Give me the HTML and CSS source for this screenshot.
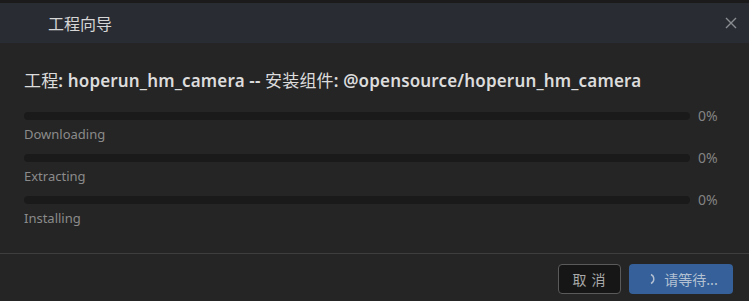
FILE: index.html
```html
<!DOCTYPE html>
<html lang="zh">
<head>
<meta charset="utf-8">
<link rel="stylesheet" href="styles.css">
</head>
<body>
<div class="dialog">
  <div class="topstrip"></div>
  <header class="header">
    <span class="htitle">工程向导</span>
    <svg class="close" width="12" height="12" viewBox="0 0 12 12"><path d="M1 1L11 11M11 1L1 11" stroke="#8a8d92" stroke-width="1.4" fill="none"/></svg>
  </header>
  <main class="body">
    <h1 class="title"><span class="cjk">工程</span>: hoperun_hm_camera -- <span class="cjk">安装组件</span>: @opensource/hoperun_hm_camera</h1>
    <div class="step">
      <div class="barrow"><div class="bar"><div class="fill" style="width:0%"></div></div><span class="pct">0%</span></div>
      <div class="label">Downloading</div>
    </div>
    <div class="step">
      <div class="barrow"><div class="bar"><div class="fill" style="width:0%"></div></div><span class="pct">0%</span></div>
      <div class="label">Extracting</div>
    </div>
    <div class="step">
      <div class="barrow"><div class="bar"><div class="fill" style="width:0%"></div></div><span class="pct">0%</span></div>
      <div class="label">Installing</div>
    </div>
  </main>
  <footer class="footer">
    <button class="btn cancel">取 消</button>
    <button class="btn primary"><svg class="spin" width="10" height="12" viewBox="0 0 10 12"><path d="M3 1.5 A5 5 0 0 1 3 10.5" stroke="#b3c0d2" stroke-width="1.4" fill="none"/></svg>请等待...</button>
  </footer>
</div>
</body>
</html>
```
FILE: styles.css
```css
* { box-sizing: border-box; margin: 0; padding: 0; }
html, body { width: 749px; height: 301px; overflow: hidden; background: #252525; }
body { font-family: "Noto Sans", "Noto Sans CJK SC", sans-serif; }
.dialog { display: flex; flex-direction: column; height: 301px; background: #252525; }
.topstrip { height: 3px; background: #1b1b1c; }
.header { height: 40px; background: #292c33; display: flex; align-items: center; padding-left: 48px; padding-right: 12px; }
.htitle { color: #d6d6d6; font-size: 16px; font-family: "Noto Sans CJK SC", sans-serif; flex: 1; }
.close { display: block; }
.body { flex: 1; padding: 26px 24px 0 24px; }
.title { font-size: 17px; font-weight: 600; color: #dcdcdc; line-height: 24px; margin-bottom: 19px; white-space: nowrap; letter-spacing: 0.16px; }
.cjk { font-weight: 400; }
.step { margin-bottom: 11px; }
.barrow { display: flex; align-items: center; height: 8px; }
.bar { width: 666px; height: 8px; border-radius: 4px; background: #1a1a1a; overflow: hidden; }
.fill { height: 100%; background: #3a6ea5; }
.pct { margin-left: 8px; color: #838383; font-size: 14px; line-height: 8px; }
.label { margin-top: 6px; color: #8b8b8b; font-size: 13px; line-height: 17px; }
.footer { height: 48px; border-top: 1px solid #3e3e3e; display: flex; justify-content: flex-end; align-items: flex-start; padding-top: 10px; padding-right: 16px; gap: 8px; }
.btn { height: 30px; border-radius: 4px; font-size: 14px; font-family: "Noto Sans CJK SC", sans-serif; display: flex; align-items: center; justify-content: center; }
.cancel { width: 63px; background: #161616; border: 1px solid #5a5a5a; color: #a9a9a9; letter-spacing: 1px; }
.primary { width: 104px; background: #35609a; border: none; color: #b3c0d2; padding-left: 4px; }
.spin { margin-right: 6px; }
```
